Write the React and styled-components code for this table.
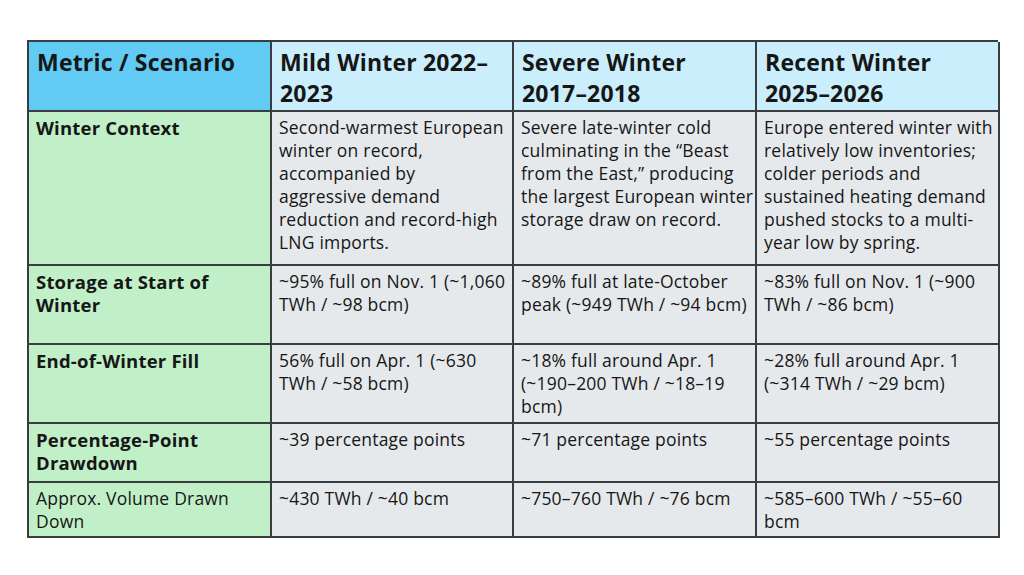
import React from 'react'
import styled, { createGlobalStyle } from 'styled-components'

const GlobalStyle = createGlobalStyle`
    html, body {
        margin: 0;
        background: #ffffff;
    }
    body {
        font-family: "Open Sans", "Liberation Sans", sans-serif;
        color: #161616;
    }
`

const Page = styled.div`
    width: 1024px;
    height: 575px;
    padding: 40px 0 0 27px;
    box-sizing: border-box;
`
const Table = styled.div`
    display: grid;
    width: 971px;
    grid-template-columns: 243px 242px 243px 243px;
    grid-template-rows: 70px 154px 79px 79px 59px 55px;
    border-top: 2px solid #3a3d40;
    border-left: 2px solid #3a3d40;
    box-sizing: border-box;
`
const Cell = styled.div`
    border-right: 2px solid #3a3d40;
    border-bottom: 2px solid #3a3d40;
    padding: ${p => (p.$head ? '5px 8px 0 8px' : '4px 7px 0 7px')};
    background: ${p => p.$bg};
    font-size: ${p => (p.$head ? '23px' : p.$bold ? '18.5px' : '17.5px')};
    font-weight: ${p => (p.$head || p.$bold ? 700 : 400)};
    letter-spacing: 0.2px;
    line-height: ${p => (p.$head ? '31px' : '23px')};
    white-space: nowrap;
    overflow: hidden;
`

const colors = {
    headMain: '#61cbf3',
    head: '#caeefb',
    side: '#c1f0c8',
    body: '#e6e9ec',
}

const header = [
    ['Metric / Scenario'],
    ['Mild Winter 2022–', '2023'],
    ['Severe Winter', '2017–2018'],
    ['Recent Winter', '2025–2026'],
]

const rows = [
    {
        label: ['Winter Context'],
        bold: true,
        cells: [
            ['Second-warmest European', 'winter on record,', 'accompanied by', 'aggressive demand', 'reduction and record-high', 'LNG imports.'],
            ['Severe late-winter cold', 'culminating in the “Beast', 'from the East,” producing', 'the largest European winter', 'storage draw on record.'],
            ['Europe entered winter with', 'relatively low inventories;', 'colder periods and', 'sustained heating demand', 'pushed stocks to a multi-', 'year low by spring.'],
        ],
    },
    {
        label: ['Storage at Start of', 'Winter'],
        bold: true,
        cells: [
            ['~95% full on Nov. 1 (~1,060', 'TWh / ~98 bcm)'],
            ['~89% full at late-October', 'peak (~949 TWh / ~94 bcm)'],
            ['~83% full on Nov. 1 (~900', 'TWh / ~86 bcm)'],
        ],
    },
    {
        label: ['End-of-Winter Fill'],
        bold: true,
        cells: [
            ['56% full on Apr. 1 (~630', 'TWh / ~58 bcm)'],
            ['~18% full around Apr. 1', '(~190–200 TWh / ~18–19', 'bcm)'],
            ['~28% full around Apr. 1', '(~314 TWh / ~29 bcm)'],
        ],
    },
    {
        label: ['Percentage-Point', 'Drawdown'],
        bold: true,
        cells: [
            ['~39 percentage points'],
            ['~71 percentage points'],
            ['~55 percentage points'],
        ],
    },
    {
        label: ['Approx. Volume Drawn', 'Down'],
        bold: false,
        cells: [
            ['~430 TWh / ~40 bcm'],
            ['~750–760 TWh / ~76 bcm'],
            ['~585–600 TWh / ~55–60', 'bcm'],
        ],
    },
]

const Lines = ({ lines }) =>
    lines.map((line, i) => (
        <React.Fragment key={i}>
            {i > 0 && <br />}
            {line}
        </React.Fragment>
    ))

const App = () => {
    return (
        <Page>
            <GlobalStyle />
            <Table>
                {header.map((h, i) => (
                    <Cell key={i} $head $bg={i === 0 ? colors.headMain : colors.head}>
                        <Lines lines={h} />
                    </Cell>
                ))}
                {rows.map((row, r) => (
                    <React.Fragment key={r}>
                        <Cell $bold={row.bold} $bg={colors.side}>
                            <Lines lines={row.label} />
                        </Cell>
                        {row.cells.map((c, i) => (
                            <Cell key={i} $bg={colors.body}>
                                <Lines lines={c} />
                            </Cell>
                        ))}
                    </React.Fragment>
                ))}
            </Table>
        </Page>
    )
}

export default App
